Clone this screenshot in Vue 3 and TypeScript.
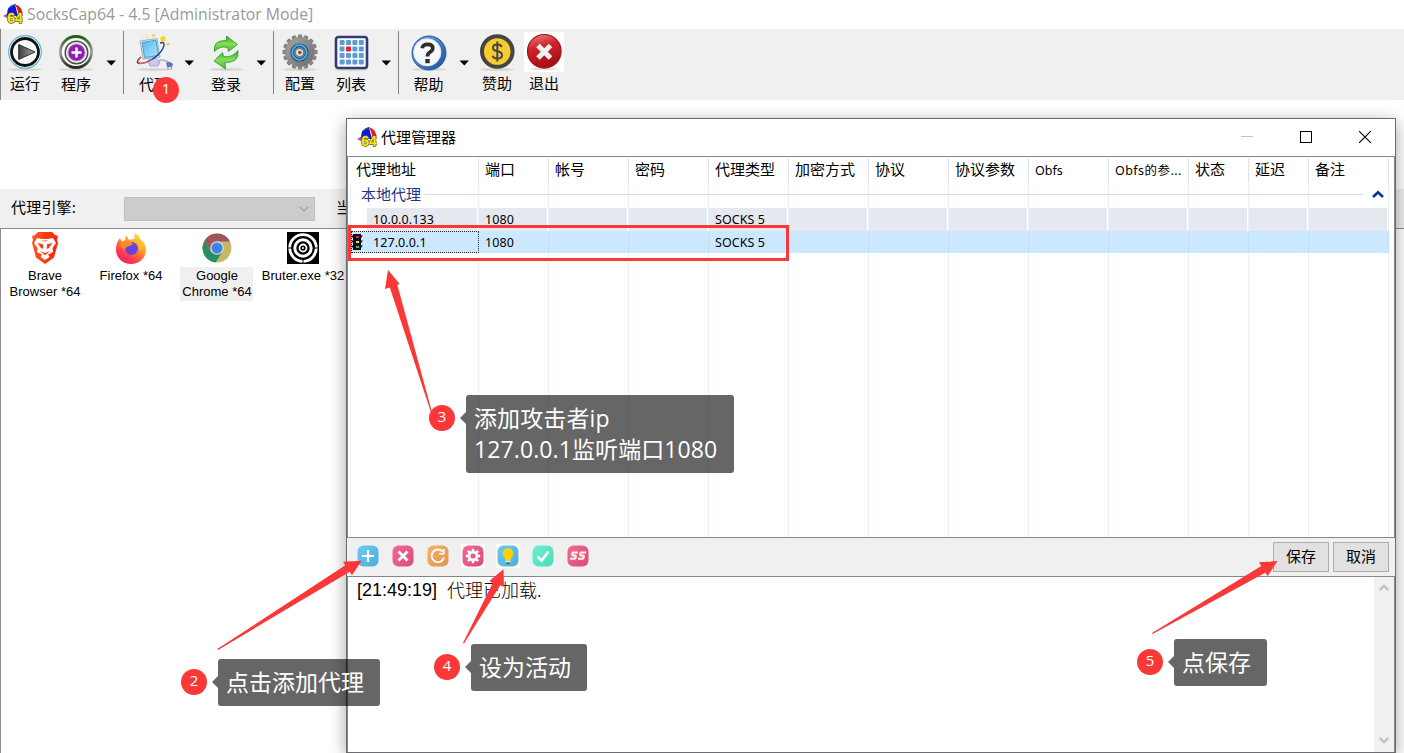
<script setup lang="ts">
type Entry =
  | { kind: 'sep' }
  | { kind: 'gap'; width: number }
  | { kind: 'caret'; width: number }
  | { kind: 'tool'; width: number; icon: string; label: string; low?: boolean }

const toolbar: Entry[] = [
  { kind: 'sep' },
  { kind: 'tool', width: 48, icon: 'run', label: '运行' },
  { kind: 'tool', width: 54, icon: 'program', label: '程序', low: true },
  { kind: 'caret', width: 16 },
  { kind: 'gap', width: 4 },
  { kind: 'sep' },
  { kind: 'tool', width: 60, icon: 'proxy', label: '代理', low: true },
  { kind: 'caret', width: 10 },
  { kind: 'tool', width: 64, icon: 'login', label: '登录', low: true },
  { kind: 'caret', width: 6 },
  { kind: 'gap', width: 9 },
  { kind: 'sep' },
  { kind: 'tool', width: 52, icon: 'config', label: '配置' },
  { kind: 'tool', width: 50, icon: 'list', label: '列表', low: true },
  { kind: 'caret', width: 20 },
  { kind: 'gap', width: 2 },
  { kind: 'sep' },
  { kind: 'tool', width: 59, icon: 'help', label: '帮助', low: true },
  { kind: 'caret', width: 12 },
  { kind: 'gap', width: 4 },
  { kind: 'tool', width: 46, icon: 'donate', label: '赞助' },
  { kind: 'tool', width: 48, icon: 'exit', label: '退出' },
]

const apps = [
  { icon: 'brave', lines: ['Brave', 'Browser *64'], active: false },
  { icon: 'firefox', lines: ['Firefox *64'], active: false },
  { icon: 'chrome', lines: ['Google', 'Chrome *64'], active: true },
  { icon: 'bruter', lines: ['Bruter.exe *32'], active: false },
]

const headers = ['代理地址', '端口', '帐号', '密码', '代理类型', '加密方式', '协议', '协议参数', 'Obfs', 'Obfs的参...', '状态', '延迟', '备注']
const rows = [
  { cells: ['10.0.0.133', '1080', '', '', 'SOCKS 5', '', '', '', '', '', '', '', ''], selected: false },
  { cells: ['127.0.0.1', '1080', '', '', 'SOCKS 5', '', '', '', '', '', '', '', ''], selected: true },
]

const actions = ['add', 'remove', 'refresh', 'settings', 'bulb', 'check', 'ss']
const teeth = Array.from({ length: 16 }, (_, i) => i * 22.5)
const cogTeeth = Array.from({ length: 8 }, (_, i) => i * 45)
const dots = Array.from({ length: 16 }, (_, i) => ({ x: 9 + (i % 4) * 6.4, y: 8 + Math.floor(i / 4) * 6.5, red: i === 5 }))
</script>

<template>
  <div class="screen">
    <svg class="defs" width="0" height="0">
      <defs>
        <linearGradient id="gPlay" x1="0" y1="0" x2="1" y2="0"><stop offset="0" stop-color="#3d3d3d" /><stop offset="1" stop-color="#a8a8a8" /></linearGradient>
        <linearGradient id="gScreen" x1="0" y1="0" x2="1" y2="1"><stop offset="0" stop-color="#58b7ee" /><stop offset="1" stop-color="#a9e6fb" /></linearGradient>
        <linearGradient id="gGreen" x1="0" y1="0" x2="0" y2="1"><stop offset="0" stop-color="#2fa530" /><stop offset=".5" stop-color="#86e058" /><stop offset="1" stop-color="#3fba38" /></linearGradient>
        <linearGradient id="gRed" x1="0" y1="0" x2=".3" y2="1"><stop offset="0" stop-color="#e58a8a" /><stop offset=".45" stop-color="#cf2329" /><stop offset="1" stop-color="#a80d14" /></linearGradient>
        <linearGradient id="gBlue" x1="0" y1="0" x2="1" y2="1"><stop offset="0" stop-color="#6ca6e6" /><stop offset="1" stop-color="#1c4f9e" /></linearGradient>
        <linearGradient id="gRing" x1="0" y1="0" x2="0" y2="1"><stop offset="0" stop-color="#1f5e10" /><stop offset=".5" stop-color="#9aa596" /><stop offset="1" stop-color="#20301c" /></linearGradient>
        <linearGradient id="gGear" x1="0" y1="0" x2="1" y2="1"><stop offset="0" stop-color="#a5a5a5" /><stop offset="1" stop-color="#6c6c6c" /></linearGradient>
        <linearGradient id="gBrave" x1="0" y1="0" x2="1" y2="0"><stop offset="0" stop-color="#ff5a1c" /><stop offset="1" stop-color="#ff1e0c" /></linearGradient>
        <linearGradient id="gFox" x1=".85" y1="0" x2=".2" y2="1"><stop offset="0" stop-color="#fff04a" /><stop offset=".4" stop-color="#ff9a2a" /><stop offset=".75" stop-color="#ff3a4d" /><stop offset="1" stop-color="#e51f7d" /></linearGradient>
        <linearGradient id="add" x1="0" y1="0" x2="1" y2="1"><stop offset="0" stop-color="#6bcbf3" /><stop offset="1" stop-color="#4baedb" /></linearGradient>
        <linearGradient id="pink" x1="0" y1="0" x2="1" y2="1"><stop offset="0" stop-color="#f46a95" /><stop offset="1" stop-color="#dc4a7b" /></linearGradient>
        <linearGradient id="orange" x1="0" y1="0" x2="1" y2="1"><stop offset="0" stop-color="#f3b66d" /><stop offset="1" stop-color="#df934a" /></linearGradient>
        <linearGradient id="mint" x1="0" y1="0" x2="1" y2="1"><stop offset="0" stop-color="#6df0d3" /><stop offset="1" stop-color="#4bdcb4" /></linearGradient>
        <g id="logo">
          <path d="M0 12 L7 8 L8 13 L4 14Z" fill="#a24fc0" />
          <path d="M4 12 Q3.500 1 12 .5 L15 12 Z" fill="#1414e2" />
          <path d="M12 .5 Q20 2 19.500 12 L15.500 12 Q15 5 12 .5Z" fill="#e01c1c" />
          <path d="M7 3.500 Q9 .8 13 .6" fill="none" stroke="#1c7a6a" stroke-width="1.200" />
          <text x="4.200" y="19" font-family="Liberation Sans, sans-serif" font-weight="bold" font-size="15.500" textLength="15.500" lengthAdjust="spacingAndGlyphs" fill="#f3e922" stroke="#6b6413" stroke-width="1.600" paint-order="stroke">64</text>
        </g>
      </defs>
    </svg>

    <header class="titlebar">
      <svg class="logo" viewBox="0 0 20 20"><use href="#logo" /></svg>
      <span class="app-title">SocksCap64 - 4.5 [Administrator Mode]</span>
    </header>

    <nav class="toolbar">
      <template v-for="(t, i) in toolbar" :key="i">
        <i v-if="t.kind === 'sep'" class="sep"></i>
        <i v-else-if="t.kind === 'gap'" class="gap" :style="{ width: t.width + 'px' }"></i>
        <div v-else-if="t.kind === 'caret'" class="caret" :style="{ width: t.width + 'px' }">
          <svg width="10" height="6" viewBox="0 0 10 6"><path d="M.5 .5H10L5.300 5.500Z" fill="#000" /></svg>
        </div>
        <div v-else class="tool" :class="{ low: t.low }" :style="{ width: t.width + 'px' }">
          <svg width="40" height="40" viewBox="0 0 40 40">
            <ellipse v-if="t.icon !== 'exit'" cx="20" cy="37.500" rx="17" ry="1.500" fill="#d9d5cb" />
            <g v-if="t.icon === 'run'">
              <circle cx="20" cy="20" r="16.300" fill="#fff" stroke="#58b4de" stroke-width="1.200" />
              <circle cx="20" cy="20" r="13.500" fill="#f7f7f7" stroke="#111" stroke-width="2.800" />
              <path d="M13.700 12.500 L30 20 L13.700 27.500Z" fill="url(#gPlay)" stroke="#222" stroke-width=".9" />
            </g>
            <g v-else-if="t.icon === 'program'">
              <circle cx="20" cy="20" r="15.500" fill="#fff" stroke="url(#gRing)" stroke-width="2.800" />
              <circle cx="20.500" cy="20.500" r="11.300" fill="#f5f5f5" stroke="#4d4d4d" stroke-width="1.500" />
              <circle cx="20.500" cy="20.500" r="8.600" fill="#8e1fb0" stroke="#b9a6c2" stroke-width="1" />
              <path d="M20.500 15.500v10M15.500 20.500h10" stroke="#fff" stroke-width="2.400" />
            </g>
            <g v-else-if="t.icon === 'proxy'">
              <path d="M6 9 L23 6.500 L26 25 L9 27Z" fill="#dfe6ee" stroke="#8aa0b8" stroke-width=".8" />
              <path d="M8 10.500 L22 8.200 L24.500 23.500 L10.500 25.500Z" fill="url(#gScreen)" stroke="#2e8fd0" stroke-width=".8" />
              <path d="M14 28 L22 26.500 L26 30 L24 34 L16 34Z" fill="#c6cdf0" stroke="#8791c4" stroke-width=".7" />
              <path d="M7 25 C-3 34 10 33 20 26 C31 18 33 8 26 11" fill="none" stroke="#17398e" stroke-width="1.400" />
              <path d="M7 25 C-1 33 9 33 18 27.500" fill="none" stroke="#e2685a" stroke-width="1.200" />
              <path d="M25 31 Q25 27 29 28 T34 30" fill="none" stroke="#b4b4b8" stroke-width="1.600" />
              <path d="M32 31 Q35 28 39 32 L38 35 L33 35Z" fill="#6b70c4" />
              <path d="M34 35v2.500M37.300 35v2.500" stroke="#8a8cb4" stroke-width="1.200" />
              <circle cx="29" cy="7" r="2.700" fill="#fbd321" /><circle cx="34" cy="12" r="1.300" fill="#fbc221" /><circle cx="19.500" cy="3.500" r="1.400" fill="#fbd321" /><circle cx="13" cy="5" r="1" fill="#fbd870" /><circle cx="9" cy="6.500" r=".7" fill="#fbd870" />
            </g>
            <g v-else-if="t.icon === 'login'" stroke="#278c28" stroke-width=".7">
              <path d="M8.500 19.500 Q6.500 8 20.500 8.500 L20.500 4 L31.500 12.500 L22.500 19.500 L21.500 15.500 Q14 13.500 8.500 19.500Z" fill="url(#gGreen)" />
              <path d="M32 18.500 Q33.500 31 19 30.500 L19.500 37 L8 29 L16.500 20.500 L17.500 24.500 Q26 26 32 18.500Z" fill="url(#gGreen)" />
            </g>
            <g v-else-if="t.icon === 'config'">
              <rect v-for="a in teeth" :key="a" x="17.800" y="2.500" width="4.400" height="7" rx="1" fill="#858585" :transform="`rotate(${a} 20 20)`" />
              <circle cx="20" cy="20" r="14.700" fill="url(#gGear)" stroke="#8e8e8e" stroke-width=".8" />
              <circle cx="19.500" cy="20.500" r="7.300" fill="#888" stroke="#17476e" stroke-width="3.600" />
              <circle cx="19.500" cy="20.500" r="7.300" fill="none" stroke="#49b6f5" stroke-width="1.800" />
              <circle cx="19.500" cy="20.500" r="4.200" fill="#dedede" stroke="#777" stroke-width="1.200" />
              <circle cx="19.800" cy="20.500" r="1.700" fill="#555" />
            </g>
            <g v-else-if="t.icon === 'list'">
              <rect x="5" y="5" width="31" height="31" rx="2.500" fill="#fdfdff" stroke="#313b74" stroke-width="2.600" />
              <rect v-for="(d, k) in dots" :key="k" :x="d.x - .4" :y="d.y" width="5" height="5" rx="1" :fill="d.red ? '#ee1b24' : '#5d9bd5'" />
            </g>
            <g v-else-if="t.icon === 'help'">
              <circle cx="20" cy="21" r="17" fill="url(#gBlue)" stroke="#285ba5" />
              <circle cx="18.300" cy="20.300" r="13.600" fill="#f8f8f8" stroke="#dfe8f2" stroke-width="1" />
              <path d="M13.200 16.300 Q13.700 12.300 18.500 12.300 Q23.800 12.300 23.800 16 Q23.800 18.500 20.500 20.500 Q18.500 21.700 18.500 24.500" fill="none" stroke="#2d2d2d" stroke-width="3.700" />
              <rect x="16.300" y="27" width="4.400" height="4.200" fill="#2d2d2d" />
            </g>
            <g v-else-if="t.icon === 'donate'">
              <circle cx="20.300" cy="19.500" r="15.300" fill="#f8cb2e" stroke="#454545" stroke-width="4" />
              <path d="M24.700 15 Q24 12.500 20.300 12.500 Q16 12.500 16 15.800 Q16 18.500 20.300 19.300 Q25 20 25 23.200 Q25 26.500 20.300 26.500 Q16.300 26.500 15.500 23.800 M20.300 9.500V29.500" fill="none" stroke="#454545" stroke-width="2" />
            </g>
            <g v-else>
              <rect width="40" height="40" fill="#fff" />
              <ellipse cx="20" cy="37" rx="15" ry="1" fill="#e2ded8" />
              <circle cx="20.300" cy="19.300" r="16.800" fill="url(#gRed)" stroke="#a51319" stroke-width="1.200" />
              <path d="M14 13.500 L26.500 26 M26.500 13.500 L14 26" stroke="#f2f2f2" stroke-width="5" />
            </g>
          </svg>
          <span>{{ t.label }}</span>
        </div>
      </template>
    </nav>

    <div class="banner"></div>

    <div class="engine">
      <span class="engine-label">代理引擎:</span>
      <div class="combo"><svg width="10" height="6" viewBox="0 0 10 6"><path d="M.7.7 5 5 9.300.7" fill="none" stroke="#9a9a9a" stroke-width="1.100" /></svg></div>
      <span class="current">当前</span>
    </div>

    <main class="apps">
      <div v-for="a in apps" :key="a.icon" class="app">
        <svg width="32" height="32" viewBox="0 0 32 32">
          <g v-if="a.icon === 'brave'">
            <path d="M9 0 H23 L26 3 L29 4 L28 8 L29 11 L25 25.500 L16 32 L7 25.500 L3 11 L4 8 L3 4 L6 3Z" fill="url(#gBrave)" />
            <path d="M8 6 L13 7 H19 L24 6 L27 11 L23.500 16 L24 20 L19 22.500 L20.500 25 L16 28 L11.500 25 L13 22.500 L8 20 L8.500 16 L5 11Z" fill="#fff" />
            <path d="M8.500 11 L14 12.300 L14.300 17 L12 16Z M23.500 11 L18 12.300 L17.700 17 L20 16Z M11 19 L16 21 L21 19 L16.500 23H15.500Z M12.500 8.500h7l-3.500 1Z" fill="#ff3e18" />
          </g>
          <g v-else-if="a.icon === 'firefox'">
            <path d="M3 9 L5 6 L7 10 L10 8 L11 3 L14 8 Q17 7 19 7 L20 1 Q24 3 26 8 Q31 11 31 18 A15 14 0 0 1 1 18 Q1 12 3 9Z" fill="url(#gFox)" />
            <circle cx="16.500" cy="16.500" r="6.500" fill="#6a43df" />
            <path d="M5 11 Q12 7 18 11.500 L16 13.500 Q11 14 10 17.500 Q5 16 5 11Z" fill="#ff8a22" />
            <path d="M21 9 Q26 13 24 20 Q29 15 26 8Z" fill="#ffbe32" />
          </g>
          <g v-else-if="a.icon === 'chrome'">
            <circle cx="16" cy="16" r="14.500" fill="#c6b863" />
            <path d="M3.200 9.200 A14.500 14.500 0 0 1 29 9.500 H16 L10 19Z" fill="#a05459" />
            <path d="M3.400 8.900 A14.500 14.500 0 0 0 14.500 30.500 L21.500 19.500 L10 19.500Z" fill="#259067" />
            <circle cx="16" cy="16" r="6.800" fill="#dcdcc8" /><circle cx="16" cy="16" r="5.500" fill="#3b84ec" />
          </g>
          <g v-else>
            <rect width="32" height="32" fill="#000" />
            <g fill="none" stroke="#fff"><circle cx="16" cy="16" r="13.300" stroke-width="2.800" /><circle cx="16" cy="16" r="8.200" stroke-width="3" /><circle cx="16" cy="16" r="3.500" stroke-width="1.800" /></g>
            <circle cx="16" cy="16" r="1" fill="#fff" />
            <path d="M1 16h4M27 16h4M16 27v4" stroke="#000" stroke-width="1" />
          </g>
        </svg>
        <div class="app-name" :class="{ active: a.active }"><div v-for="l in a.lines" :key="l">{{ l }}</div></div>
      </div>
    </main>

    <section class="dialog">
      <div class="dlg-title">
        <svg class="dlg-logo" viewBox="0 0 20 20"><use href="#logo" /></svg>
        <span>代理管理器</span>
        <div class="win-buttons">
          <svg width="12" height="12" viewBox="0 0 12 12"><path d="M0 5.500H12" stroke="#c4c4c4" /></svg>
          <svg width="12" height="12" viewBox="0 0 12 12"><rect x=".5" y=".5" width="11" height="11" fill="none" stroke="#000" /></svg>
          <svg width="12" height="12" viewBox="0 0 12 12"><path d="M0 0 12 12M12 0 0 12" stroke="#000" stroke-width="1.100" /></svg>
        </div>
      </div>

      <div class="table">
        <div class="cols head"><span v-for="h in headers" :key="h" :class="{ latin: h.startsWith('Obfs') }">{{ h }}</span></div>
        <div class="group">
          <span>本地代理</span><i></i>
          <svg width="12" height="8" viewBox="0 0 12 8"><path d="M1 7 6 2.200 11 7" fill="none" stroke="#08339c" stroke-width="2.600" /></svg>
        </div>
        <div v-for="(r, i) in rows" :key="i" class="cols row" :class="{ selected: r.selected }">
          <span v-for="(c, k) in r.cells" :key="k">{{ c }}</span>
          <svg v-if="r.selected" class="signal" width="12" height="16" viewBox="0 0 12 16">
            <path d="M0 1.500h12l-2 2.500H2zM0 6.500h12l-2 2.500H2zM0 11.500h12l-2 2.500H2z" fill="#111" /><rect x="2" width="8" height="16" fill="#0a0a1e" />
            <rect x="5" y="2" width="3" height="2" fill="#f02020" /><rect x="5" y="7" width="3" height="2" fill="#f5e020" /><rect x="5" y="12" width="3" height="2" fill="#14e020" />
          </svg>
        </div>
        <div class="cols lines"><i v-for="h in headers" :key="h"></i></div>
      </div>

      <div class="actions">
        <div v-for="a in actions" :key="a" class="action" :class="{ plate: a === 'settings' || a === 'bulb' }">
          <svg width="22" height="22" viewBox="0 0 22 22">
            <rect x=".5" y=".5" width="21" height="21" rx="6" :fill="a === 'add' || a === 'bulb' ? 'url(#add)' : a === 'refresh' ? 'url(#orange)' : a === 'check' ? 'url(#mint)' : 'url(#pink)'" />
            <path v-if="a === 'add'" d="M11 5v12M5 11h12" stroke="#fff" stroke-width="2.200" />
            <path v-else-if="a === 'remove'" d="M6.500 6.500 15.500 15.500M15.500 6.500 6.500 15.500" stroke="#fff" stroke-width="2.800" />
            <g v-else-if="a === 'refresh'" fill="none" stroke="#fff" stroke-width="1.900"><path d="M17 12.500A6.300 6.300 0 1 1 15.500 6.500" /><path d="M16.700 4v4.700h-4.700" stroke-width="1.600" /></g>
            <g v-else-if="a === 'settings'">
              <rect v-for="t in cogTeeth" :key="t" x="9.700" y="3.800" width="2.600" height="4" fill="#fff" :transform="`rotate(${t} 11 11)`" />
              <circle cx="11" cy="11" r="3.900" fill="none" stroke="#fff" stroke-width="2.600" />
            </g>
            <g v-else-if="a === 'bulb'">
              <path d="M11 3.200 A5.300 5.300 0 0 1 14.500 12.500 L13.500 15.500 H8.500 L7.500 12.500 A5.300 5.300 0 0 1 11 3.200Z" fill="#fbd203" /><path d="M8.500 15.500h5v2h-5z" fill="#e6e1cf" /><path d="M9.500 17.500h3v1.500h-3z" fill="#5b4a3a" />
            </g>
            <path v-else-if="a === 'check'" d="M5.500 11.500 9.500 15.500 16.500 6.500" fill="none" stroke="#fff" stroke-width="2.600" />
            <g v-else fill="none" stroke="#fff3e6" stroke-width="2.100" stroke-linejoin="round"><path d="M11 7.500H6Q4.500 9.500 5.500 10.500H8.500Q9.500 12.500 7.500 13.800H3" /><path d="M19 7.500H14Q12.500 9.500 13.500 10.500H16.500Q17.500 12.500 15.500 13.800H11" /></g>
          </svg>
        </div>
        <div class="spacer"></div>
        <button>保存</button><button>取消</button>
      </div>

      <div class="log">
        <div class="log-text"><span class="time">[21:49:19]</span><span class="msg">代理已加载.</span></div>
        <div class="scroll">
          <svg width="10" height="7" viewBox="0 0 10 7"><path d="M.8 6 5 1.800 9.200 6" fill="none" stroke="#b8b8b8" stroke-width="1.800" /></svg>
          <svg width="10" height="7" viewBox="0 0 10 7"><path d="M.8 1 5 5.200 9.200 1" fill="none" stroke="#b8b8b8" stroke-width="1.800" /></svg>
        </div>
      </div>
    </section>

    <div class="outline"></div>
    <svg class="arrows" width="1404" height="753" viewBox="0 0 1404 753" fill="#fb3838">
      <path d="M388 270 399.700 284 397.300 284.800 431.700 411 430.600 411.300 389.800 287.500 385 289Z" />
      <path d="M361.700 560.700 343 561.700 345.300 565.300 217.300 649 218 650 349.700 571.700 352 575.300Z" />
      <path d="M503.500 569.300 489.300 581 492.700 583 463 643 464 643.600 500.300 585.300 504 587Z" />
      <path d="M1277.500 561 1259 562.300 1261.300 566 1152 633 1152.600 634 1265.300 572.700 1267.700 576Z" />
    </svg>
    <b class="badge b1">1</b>
    <b class="badge b2">2</b><div class="tip t2">点击添加代理</div>
    <b class="badge b3">3</b><div class="tip t3">添加攻击者ip<br />127.0.0.1监听端口1080</div>
    <b class="badge b4">4</b><div class="tip t4">设为活动</div>
    <b class="badge b5">5</b><div class="tip t5">点保存</div>
  </div>
</template>

<style>
body { background: #fff; overflow: hidden; }
</style>

<style scoped>
*, *::before, *::after { box-sizing: border-box; }
.screen { position: relative; width: 1404px; height: 753px; overflow: hidden; background: #fff; color: #000; display: flex; flex-direction: column; font-family: "Noto Sans", "Noto Sans CJK SC", sans-serif; }
.defs { position: absolute; }
svg { display: block; flex: none; }
.titlebar { height: 29px; display: flex; align-items: center; padding: 0 0 1px 3px; }
.logo { width: 20px; height: 20px; }
.app-title { margin-left: 4px; font: 15.8px/20px "Open Sans", sans-serif; color: #999; white-space: nowrap; }
.toolbar { height: 71px; background: #f0f0f0; display: flex; }
.sep { width: 1px; height: 63px; margin-top: 2px; background: #868686; }
.sep:first-child { height: 71px; margin: 0; }
.caret { display: flex; justify-content: center; padding-top: 31px; }
.tool { padding-top: 3px; display: flex; flex-direction: column; align-items: center; }
.tool span { font: 15px/20px "Noto Sans CJK SC", sans-serif; margin-top: 1px; white-space: nowrap; }
.tool.low span { margin-top: 2px; }
.banner { height: 89px; }
.engine { height: 39px; background: #f0f0f0; display: flex; align-items: center; padding-left: 11px; font: 15px/20px "Noto Sans CJK SC", sans-serif; }
.engine-label { width: 113px; padding-bottom: 3px; letter-spacing: .2px; }
.combo { width: 191px; height: 24px; background: #ccc; border: 1px solid #bfbfbf; display: flex; align-items: center; justify-content: flex-end; padding-right: 5px; }
.current { margin-left: 21px; padding-bottom: 3px; }
.apps { flex: 1; border: 1px solid #8c8c8c; border-width: 1px 0 0 1px; display: flex; padding: 3px 0 0 .5px; }
.app { width: 86px; display: flex; flex-direction: column; align-items: center; }
.app svg { margin-left: 1px; }
.app-name { margin-top: 3px; padding: 1px 1px 0 2px; text-align: center; font: 13px/16px "Liberation Sans", Arial, sans-serif; white-space: nowrap; }
.app-name.active { background: #f0f0f0; height: 34px; }

.dialog { position: absolute; left: 346px; top: 118px; width: 1050px; height: 635px; border: 1px solid #6a6c70; background: #fff; display: flex; flex-direction: column; box-shadow: 0 4px 16px rgba(0, 0, 0, .36); }
.dlg-title { height: 37px; display: flex; align-items: center; padding: 0 24px 2px 10px; font: 15px/20px "Noto Sans CJK SC", sans-serif; }
.dlg-logo { width: 20px; height: 20px; margin-right: 4px; }
.win-buttons { margin-left: auto; display: flex; gap: 47px; }
.table { position: relative; height: 382px; border: 1px solid #828790; }
.cols { display: grid; grid-template-columns: 131px 70px repeat(8, 80px) 60px 60px 80px; }
.head { height: 25px; padding-top: 1px; font: 15px/22px "Noto Sans CJK SC", sans-serif; }
.head span { padding-left: 6px; white-space: nowrap; border-right: 1px solid #e2e2e2; height: 24px; }
.head span:first-child { padding-left: 8px; }
.head .latin { font: 12.5px/25px "Noto Sans", "Noto Sans CJK SC", sans-serif; }
.head .latin:nth-child(10) { letter-spacing: .45px; }
.group { height: 26px; display: flex; align-items: center; padding: 0 10px 2px 13px; font: 15px/24px "Noto Sans CJK SC", sans-serif; color: #1d3587; }
.group i { flex: 1; height: 1px; background: #d5dbe9; margin: 0 9px 0 4px; }
.row { position: relative; height: 22px; margin-bottom: 1px; font: 12.5px/23px "Noto Sans", sans-serif; letter-spacing: .08px; width: 1041px; }
.row span { margin-right: 2px; padding-left: 6px; background: #e5e8ef; white-space: nowrap; }
.row span:first-child { margin-left: 19px; }
.row.selected { background: #cce8ff; }
.row.selected::before { content: ""; position: absolute; left: 0; top: 0; width: 3px; height: 22px; background: #fff; }
.row.selected::after { content: ""; position: absolute; left: 3px; top: 0; width: 128px; height: 22px; border: 1px dotted #222; }
.row.selected span { background: none; }
.signal { position: absolute; left: 3px; top: 3px; }
.lines { position: absolute; inset: 25px 0 0; pointer-events: none; }
.lines i { border-right: 1px solid rgba(120, 180, 250, .18); }
.lines i:first-child { border-left: 1px solid rgba(120, 180, 250, .18); margin-left: 2px; }
.actions { height: 38px; background: #f0f0f0; display: flex; align-items: center; padding: 0 6px 0 9px; }
.action { width: 24px; height: 24px; margin: -2px 11px 0 0; padding: 1px; }
.plate { background: #fff; }
.spacer { flex: 1; }
button { width: 56px; height: 30px; margin-left: 4px; padding: 0 0 3px; border: 1px solid #adadad; background: #e1e1e1; color: #000; font: 15px/20px "Noto Sans CJK SC", sans-serif; }
.log { flex: 1; border: 1px solid #828790; border-width: 1px 1px 0; display: flex; }
.log-text { flex: 1; display: flex; padding: 1px 0 0 9px; line-height: 24px; }
.time { font: 18px/24px "Liberation Sans", sans-serif; width: 90px; }
.msg { font: 300 18px/22px "Noto Sans CJK SC", sans-serif; }
.scroll { width: 20px; background: #f0f0f0; display: flex; flex-direction: column; justify-content: space-between; align-items: center; padding: 7px 0 8px; }

.outline { position: absolute; left: 348px; top: 225px; width: 441px; height: 36px; border: 3px solid #fb3838; }
.arrows { position: absolute; left: 0; top: 0; }
.badge { position: absolute; width: 26px; height: 26px; border-radius: 50%; background: #fb3838; color: #fff; text-align: center; font: 15px/23px "Open Sans", sans-serif; }
.tip { position: absolute; padding: 8px 8px 8px; border-radius: 3px; background: rgba(0, 0, 0, .6); color: #fff; font: 23px/31px "Open Sans", "Noto Sans CJK SC", sans-serif; white-space: nowrap; }
.tip::before { content: ""; position: absolute; left: -6px; top: 17px; border: 6px solid transparent; border-left: 0; border-right-color: rgba(0, 0, 0, .6); }
.b1 { left: 153px; top: 77px; }
.b2 { left: 181px; top: 669px; }
.b3 { left: 429px; top: 405px; }
.b4 { left: 434px; top: 654px; }
.b5 { left: 1137px; top: 649px; }
.t2 { left: 218px; top: 659px; width: 162px; height: 47px; }
.t3 { left: 466px; top: 395px; width: 268px; height: 78px; letter-spacing: .1px; }
.t4 { left: 471px; top: 644px; width: 116px; height: 47px; }
.t5 { left: 1174px; top: 639px; width: 93px; height: 47px; }
</style>
